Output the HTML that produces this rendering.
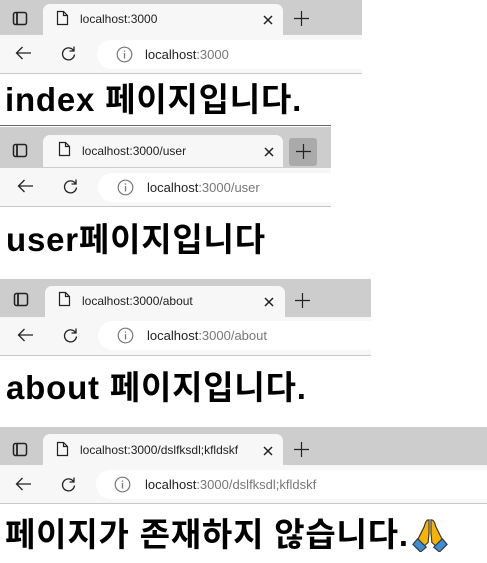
<!DOCTYPE html>
<html><head><meta charset="utf-8"><style>
*{margin:0;padding:0;box-sizing:border-box}
body{width:487px;height:563px;background:#fff;position:relative;overflow:hidden;font-family:"Liberation Sans","Noto Sans CJK KR",sans-serif}
.p{position:absolute;left:0}
.tb{position:absolute;left:0;top:0;height:35px;background:#cdcdcd;width:100%}
.tab{position:absolute;left:43px;top:4px;width:240px;height:32px;background:#f7f7f7;border-radius:7px 7px 0 0}
.tt{position:absolute;left:80px;top:12px;font-size:12px;color:#222}
.ab{position:absolute;left:0;top:35px;height:39px;background:#f7f7f7;width:100%;border-bottom:1px solid #c8c8c8}
.pill{position:absolute;left:97px;top:5px;right:-20px;height:29px;background:#fff;border-radius:15px}
.url{position:absolute;left:145px;top:12px;font-size:13px;color:#222}
.url span{color:#777}
svg{position:absolute}
h1{position:absolute;left:5px;font-family:"Liberation Sans","Noto Sans CJK KR",sans-serif;font-weight:bold;font-size:33px;letter-spacing:0.8px;color:#000;white-space:nowrap;line-height:40px}
h1 svg{position:relative;vertical-align:-6px;margin-left:2px}
</style></head><body>

<div class="p" style="top:0;width:362px;height:126px">
 <div class="tb"></div><div class="tab"></div>
 <svg style="left:12px;top:11px" width="16" height="15"><rect x="1.5" y="1.5" width="13" height="12" rx="2" fill="none" stroke="#222" stroke-width="1.5"/><line x1="5" y1="2" x2="5" y2="13" stroke="#222" stroke-width="1.8"/></svg>
 <svg style="left:56px;top:10px" width="13" height="16"><path d="M1.5 1.5h6l4 4v9h-10z M7.5 1.5v4h4" fill="none" stroke="#222" stroke-width="1.2"/></svg>
 <div class="tt">localhost:3000</div>
 <svg style="left:263px;top:15px" width="10" height="10"><path d="M1 1L9 9M9 1L1 9" stroke="#222" stroke-width="1.5"/></svg>
 <svg style="left:294px;top:11px" width="15" height="15"><path d="M7.5 0v15M0 7.5h15" stroke="#222" stroke-width="1.2"/></svg>
 <div class="ab"><div class="pill"></div>
  <svg style="left:15px;top:11px" width="17" height="14"><path d="M16 7H1.5M7.5 1L1.5 7l6 6" fill="none" stroke="#222" stroke-width="1.3"/></svg>
  <svg style="left:60px;top:10px" width="17" height="17"><path d="M13.5 5.5A6 6 0 1 0 14.5 9.5M14 1.5v4.5h-4.5" fill="none" stroke="#222" stroke-width="1.3"/></svg>
  <svg style="left:116px;top:11px" width="17" height="17"><circle cx="8.5" cy="8.5" r="7.3" fill="none" stroke="#777" stroke-width="1.2"/><path d="M8.5 7v5.5M8.5 4.5v1.3" stroke="#777" stroke-width="1.3"/></svg>
  <div class="url">localhost<span>:3000</span></div>
 </div>
 <h1 style="top:80px">index 페이지입니다.</h1>
 <div style="position:absolute;left:0;top:125px;width:331px;height:1px;background:#666"></div>
</div>

<div class="p" style="top:127px;width:331px;height:145px">
 <div class="tb" style="height:41px"></div><div class="tab" style="top:8px"></div>
 <svg style="left:12px;top:16px" width="16" height="15"><rect x="1.5" y="1.5" width="13" height="12" rx="2" fill="none" stroke="#222" stroke-width="1.5"/><line x1="5" y1="2" x2="5" y2="13" stroke="#222" stroke-width="1.8"/></svg>
 <svg style="left:58px;top:14px" width="13" height="16"><path d="M1.5 1.5h6l4 4v9h-10z M7.5 1.5v4h4" fill="none" stroke="#222" stroke-width="1.2"/></svg>
 <div class="tt" style="left:82px;top:17px">localhost:3000/user</div>
 <svg style="left:264px;top:20px" width="10" height="10"><path d="M1 1L9 9M9 1L1 9" stroke="#222" stroke-width="1.5"/></svg>
 <div style="position:absolute;left:289px;top:11px;width:28px;height:28px;background:#aaa;border-radius:3px"></div>
 <svg style="left:296px;top:17px" width="15" height="15"><path d="M7.5 0v15M0 7.5h15" stroke="#222" stroke-width="1.2"/></svg>
 <div class="ab" style="top:41px;height:39px"><div class="pill" style="left:98px"></div>
  <svg style="left:17px;top:11px" width="17" height="14"><path d="M16 7H1.5M7.5 1L1.5 7l6 6" fill="none" stroke="#222" stroke-width="1.3"/></svg>
  <svg style="left:62px;top:10px" width="17" height="17"><path d="M13.5 5.5A6 6 0 1 0 14.5 9.5M14 1.5v4.5h-4.5" fill="none" stroke="#222" stroke-width="1.3"/></svg>
  <svg style="left:117px;top:11px" width="17" height="17"><circle cx="8.5" cy="8.5" r="7.3" fill="none" stroke="#777" stroke-width="1.2"/><path d="M8.5 7v5.5M8.5 4.5v1.3" stroke="#777" stroke-width="1.3"/></svg>
  <div class="url" style="left:147px">localhost<span>:3000/user</span></div>
 </div>
 <h1 style="top:93px;left:6px">user페이지입니다</h1>
</div>

<div class="p" style="top:279px;width:371px;height:148px">
 <div class="tb" style="height:38px"></div><div class="tab" style="top:7px;left:45px"></div>
 <svg style="left:13px;top:13px" width="16" height="15"><rect x="1.5" y="1.5" width="13" height="12" rx="2" fill="none" stroke="#222" stroke-width="1.5"/><line x1="5" y1="2" x2="5" y2="13" stroke="#222" stroke-width="1.8"/></svg>
 <svg style="left:58px;top:12px" width="13" height="16"><path d="M1.5 1.5h6l4 4v9h-10z M7.5 1.5v4h4" fill="none" stroke="#222" stroke-width="1.2"/></svg>
 <div class="tt" style="left:82px;top:15px">localhost:3000/about</div>
 <svg style="left:264px;top:18px" width="10" height="10"><path d="M1 1L9 9M9 1L1 9" stroke="#222" stroke-width="1.5"/></svg>
 <svg style="left:295px;top:14px" width="15" height="15"><path d="M7.5 0v15M0 7.5h15" stroke="#222" stroke-width="1.2"/></svg>
 <div class="ab" style="top:38px;height:39px"><div class="pill" style="left:98px;top:4px"></div>
  <svg style="left:17px;top:11px" width="17" height="14"><path d="M16 7H1.5M7.5 1L1.5 7l6 6" fill="none" stroke="#222" stroke-width="1.3"/></svg>
  <svg style="left:62px;top:10px" width="17" height="17"><path d="M13.5 5.5A6 6 0 1 0 14.5 9.5M14 1.5v4.5h-4.5" fill="none" stroke="#222" stroke-width="1.3"/></svg>
  <svg style="left:117px;top:10px" width="17" height="17"><circle cx="8.5" cy="8.5" r="7.3" fill="none" stroke="#777" stroke-width="1.2"/><path d="M8.5 7v5.5M8.5 4.5v1.3" stroke="#777" stroke-width="1.3"/></svg>
  <div class="url" style="left:147px;top:11px">localhost<span>:3000/about</span></div>
 </div>
 <h1 style="top:89px;left:6px">about 페이지입니다.</h1>
</div>

<div class="p" style="top:427px;width:487px;height:136px">
 <div class="tb" style="height:38px"></div><div class="tab" style="top:7px"></div>
 <svg style="left:12px;top:15px" width="16" height="15"><rect x="1.5" y="1.5" width="13" height="12" rx="2" fill="none" stroke="#222" stroke-width="1.5"/><line x1="5" y1="2" x2="5" y2="13" stroke="#222" stroke-width="1.8"/></svg>
 <svg style="left:56px;top:14px" width="13" height="16"><path d="M1.5 1.5h6l4 4v9h-10z M7.5 1.5v4h4" fill="none" stroke="#222" stroke-width="1.2"/></svg>
 <div class="tt" style="top:16px">localhost:3000/dslfksdl;kfldskf</div>
 <svg style="left:263px;top:19px" width="10" height="10"><path d="M1 1L9 9M9 1L1 9" stroke="#222" stroke-width="1.5"/></svg>
 <svg style="left:294px;top:15px" width="15" height="15"><path d="M7.5 0v15M0 7.5h15" stroke="#222" stroke-width="1.2"/></svg>
 <div class="ab" style="top:38px;height:39px"><div class="pill" style="left:96px;top:5px"></div>
  <svg style="left:15px;top:12px" width="17" height="14"><path d="M16 7H1.5M7.5 1L1.5 7l6 6" fill="none" stroke="#222" stroke-width="1.3"/></svg>
  <svg style="left:60px;top:11px" width="17" height="17"><path d="M13.5 5.5A6 6 0 1 0 14.5 9.5M14 1.5v4.5h-4.5" fill="none" stroke="#222" stroke-width="1.3"/></svg>
  <svg style="left:114px;top:11px" width="17" height="17"><circle cx="8.5" cy="8.5" r="7.3" fill="none" stroke="#777" stroke-width="1.2"/><path d="M8.5 7v5.5M8.5 4.5v1.3" stroke="#777" stroke-width="1.3"/></svg>
  <div class="url" style="left:145px;top:12px">localhost<span>:3000/dslfksdl;kfldskf</span></div>
 </div>
 <h1 style="top:88px">페이지가 존재하지 않습니다.<svg width="38" height="36" viewBox="0 0 40 38"><path d="M19 4c-3 0-4 3-5 7l-6 12-5 7 6 6 9-8 1-10z" fill="#f4b400" stroke="#333" stroke-width="1.2"/><path d="M21 4c3 0 4 3 5 7l6 12 5 7-6 6-9-8-1-10z" fill="#f4b400" stroke="#333" stroke-width="1.2"/><path d="M2 30l5-6 9 9-6 5zM38 30l-5-6-9 9 6 5z" fill="#3b8fd6" stroke="#333" stroke-width="1.2"/></svg></h1>
</div>

</body></html>
